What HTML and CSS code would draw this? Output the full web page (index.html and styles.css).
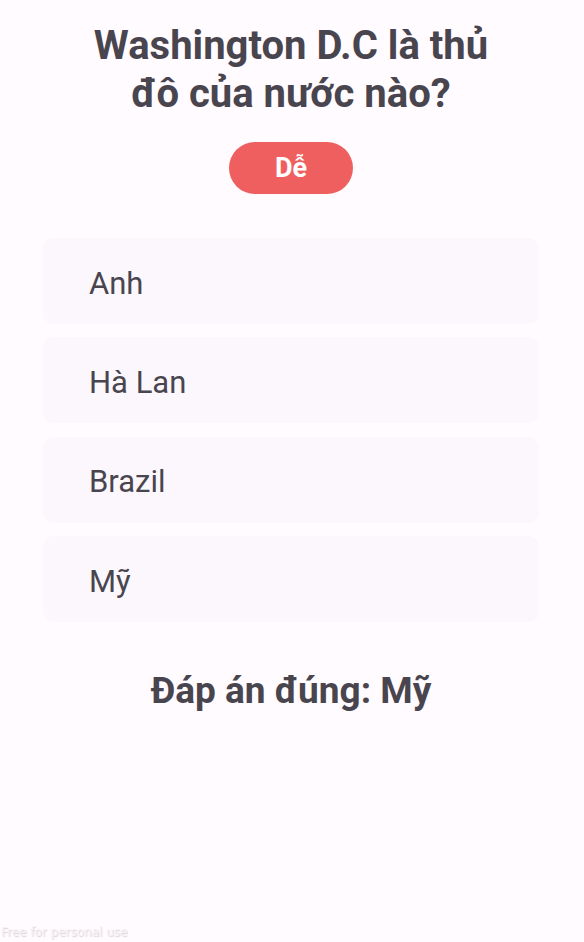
FILE: index.html
```html
<!DOCTYPE html>
<html lang="vi">
<head>
<meta charset="utf-8">
<link rel="stylesheet" href="styles.css">
</head>
<body>
<main class="screen">
  <h1 class="question">Washington D.C là thủ<br>đô của nước nào?</h1>
  <div class="badge">Dễ</div>
  <ul class="options">
    <li class="option">Anh</li>
    <li class="option">Hà Lan</li>
    <li class="option">Brazil</li>
    <li class="option">Mỹ</li>
  </ul>
  <p class="answer">Đáp án đúng: Mỹ</p>
</main>
<div class="watermark">Free for personal use</div>
</body>
</html>
```
FILE: styles.css
```css
html, body {
  margin: 0;
  padding: 0;
  background: #fffbfe;
  height: 100%;
}
body {
  font-family: Roboto, "Noto Sans", sans-serif;
  color: #49454f;
  position: relative;
  overflow: hidden;
}
.screen {
  display: flex;
  flex-direction: column;
  align-items: center;
  padding: 22px 45px 0 43px;
}
.question {
  margin: 0;
  font-size: 40px;
  line-height: 48px;
  font-weight: 700;
  text-align: center;
}
.badge {
  margin-top: 24px;
  width: 124px;
  height: 52px;
  border-radius: 26px;
  background: #ef5f5f;
  color: #ffffff;
  font-weight: 700;
  font-size: 27px;
  display: flex;
  align-items: center;
  justify-content: center;
}
.options {
  list-style: none;
  margin: 44px 0 0 0;
  padding: 0;
  width: 100%;
  display: flex;
  flex-direction: column;
  gap: 13.4px;
}
.option {
  height: 86px;
  box-sizing: border-box;
  padding: 4px 0 0 46px;
  display: flex;
  align-items: center;
  background: #fcf7fd;
  border-radius: 10px;
  font-size: 31px;
}
.answer {
  margin: 47px 0 0 0;
  font-size: 37px;
  font-weight: 700;
}
.watermark {
  position: absolute;
  left: 1px;
  bottom: 3px;
  font-family: "DejaVu Sans", sans-serif;
  font-size: 12px;
  color: #f6f2f6;
  text-shadow: 1px 1px 1px #d8d3d8;
}
```
